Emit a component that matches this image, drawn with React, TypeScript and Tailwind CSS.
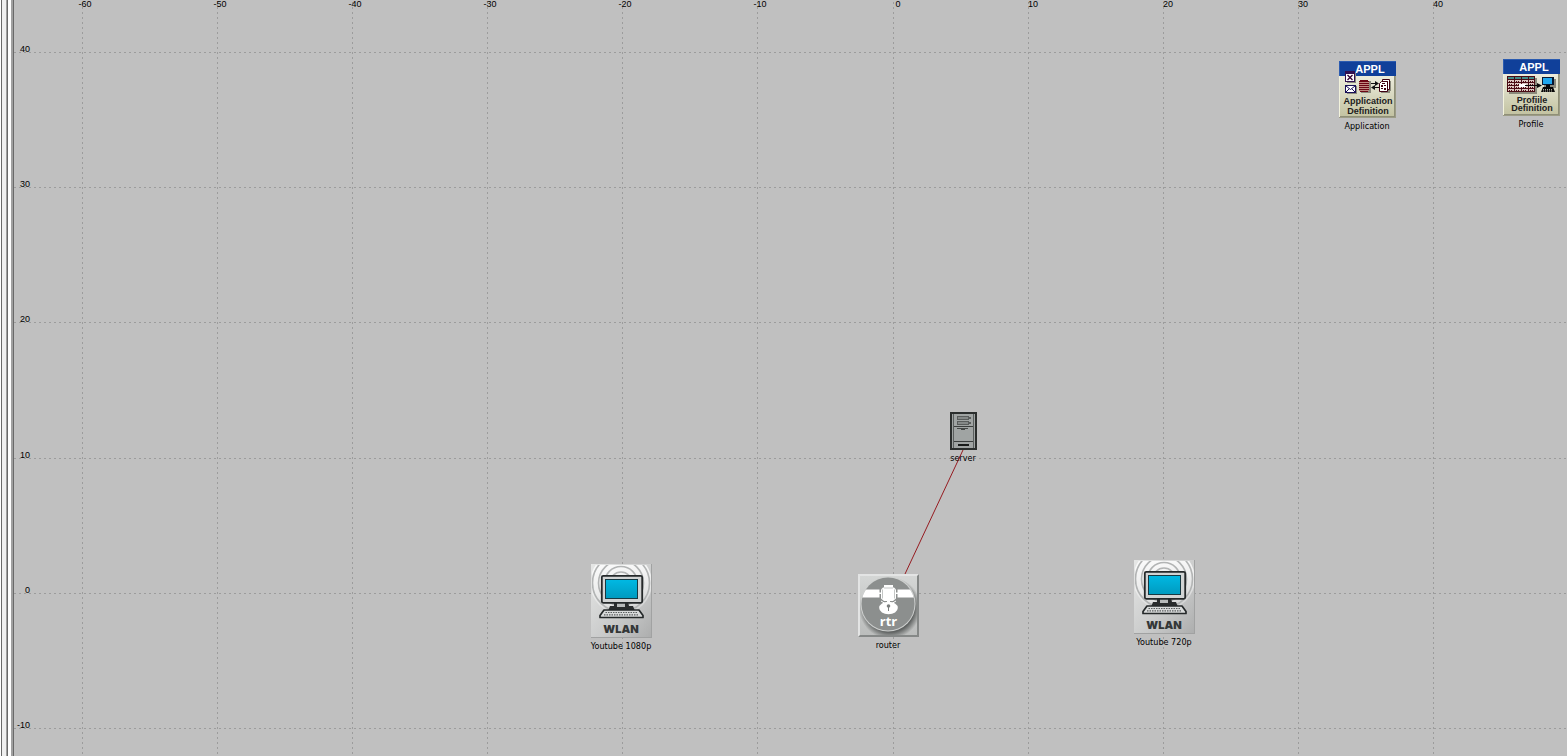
import type { ReactNode } from "react";

const columns = [
  { x: 82, label: "-60" },
  { x: 217, label: "-50" },
  { x: 352, label: "-40" },
  { x: 487, label: "-30" },
  { x: 622, label: "-20" },
  { x: 757, label: "-10" },
  { x: 893, label: "0" },
  { x: 1028, label: "10" },
  { x: 1163, label: "20" },
  { x: 1298, label: "30" },
  { x: 1433, label: "40" },
];

const rows = [
  { y: 52, label: "40" },
  { y: 187, label: "30" },
  { y: 322, label: "20" },
  { y: 458, label: "10" },
  { y: 593, label: "0" },
  { y: 728, label: "-10" },
];

function Grid() {
  return (
    <svg className="absolute inset-0 h-full w-full" aria-hidden="true" shapeRendering="crispEdges">
      <g stroke="#9c9c9c" strokeWidth="1" strokeDasharray="2 3">
        {columns.map((c) => (
          <line key={c.x} x1={c.x + 0.5} x2={c.x + 0.5} y1="2" y2="100%" />
        ))}
        {rows.map((r) => (
          <line key={r.y} x1="14" x2="100%" y1={r.y + 0.5} y2={r.y + 0.5} />
        ))}
      </g>
    </svg>
  );
}

function AxisLabels() {
  return (
    <div className="font-['Liberation_Sans',sans-serif] text-[9px] leading-[10px] text-black">
      {columns.map((c) => (
        <span
          key={c.x}
          className="absolute -top-px w-10 -translate-x-1/2 text-center"
          style={{ left: c.x + (c.label.startsWith("-") ? 3 : 5) }}
        >
          {c.label}
        </span>
      ))}
      {rows.map((r) => (
        <span key={r.y} className="absolute left-0 w-[30px] text-right" style={{ top: r.y - 8 }}>
          {r.label}
        </span>
      ))}
    </div>
  );
}

function WindowEdge() {
  return (
    <div className="absolute inset-y-0 left-0 flex" aria-hidden="true">
      <div className="w-px bg-white" />
      <div className="w-px bg-[#696969]" />
      <div className="w-1 bg-[#f0f0f0]" />
      <div className="w-px bg-[#a0a0a0]" />
      <div className="w-px bg-[#696969]" />
      <div className="w-[3px] bg-white" />
      <div className="w-0.5 bg-[#a0a0a0]" />
      <div className="w-px bg-[#696969]" />
    </div>
  );
}

function ApplIcon({ children, lines, baselines }: { children: ReactNode; lines: [string, string]; baselines: [number, number] }) {
  return (
    <svg width="57" height="57" viewBox="0 0 57 57" aria-hidden="true">
      <defs>
        <linearGradient id="beige" x1="0" y1="0" x2="0" y2="1">
          <stop offset="0" stopColor="#ececdc" />
          <stop offset="1" stopColor="#c3c3a2" />
        </linearGradient>
      </defs>
      <rect width="57" height="57" fill="#9c9c86" />
      <rect width="56" height="56" fill="#f2f2dc" />
      <rect x="1" y="15" width="54" height="40" fill="url(#beige)" />
      <path d="M55 15h1v41H1v-1h54z" fill="#8f8f78" />
      <rect width="57" height="15" fill="#10409a" />
      <path d="M0 .5h57M.5 0v15" stroke="#2b5bb0" />
      <g fontFamily="'Liberation Sans', sans-serif" fontWeight="bold" textAnchor="middle">
        <text x="31" y="12" fontSize="11" fill="#fff" fontFamily="'Liberation Sans Narrow', 'Liberation Sans', sans-serif">
          APPL
        </text>
        <text x="29" y={baselines[0]} fontSize="9" fill="#202020">
          {lines[0]}
        </text>
        <text x="29" y={baselines[1]} fontSize="9" fill="#202020">
          {lines[1]}
        </text>
      </g>
      {children}
    </svg>
  );
}

function ApplicationArt() {
  return (
    <g>
      <path d="M8 21h9v1H8zM16 12h1v10h-1zM8 32h10v1H8zM17 25h1v8h-1z" fill="#8a8a7c" />
      <path d="M6 10h10v11H6z" fill="#301050" />
      <path d="M7 13h8v7H7z" fill="#fff" />
      <path d="M8.500 14l5 5m0-5l-5 5" stroke="#300030" strokeWidth="1.300" />
      <path d="M6 24h11v8H6z" fill="#181058" />
      <path d="M7 25h9v6H7z" fill="#fff" />
      <path d="M7 25l4.500 3.500L16 25M7 31l3-3m6 3l-3-3" fill="none" stroke="#181058" />
      <path d="M22 20h10v12H22z" fill="#8a8a7c" />
      <path d="M20 20h10v10H20z" fill="#c08a80" />
      <path d="M21 19h8v1h-8zM20 20h10v1H20zM20 22h10v1H20zM20 24h10v1H20zM20 26h10v1H20zM20 28h10v1H20zM21 30h8v1h-8z" fill="#6c0814" />
      <path d="M32 22h4v-2l4 2.500-4 2.500v-2h-4zM40 26h-4v-2l-4 2.500 4 2.500v-2h4z" fill="#101010" />
      <path d="M43 20h9v10h-1v2h-9z" fill="#8a8a7c" />
      <path d="M43.500 18.500h7v10h-2v-8h-5z" fill="#fff" stroke="#400012" />
      <path d="M40.500 22.500l2-2h6v10h-8z" fill="#fff" stroke="#400012" />
      <path d="M43 22h3v1h-3zM42 24h2v2h-2zM45 24h2v1h-2zM42 27h2v1h-2zM45 27h2v2h-2z" fill="#400012" />
    </g>
  );
}

function ProfileArt() {
  return (
    <g>
      <path d="M6 19h28v16H6z" fill="#8a8a7c" />
      <path d="M4 17h28v16H4z" fill="#4a0c14" />
      <path d="M5 18h6v2H5zM12 18h6v2h-6zM19 18h6v2h-6zM26 18h5v2h-5z" fill="#438c88" />
      {[21, 24, 27, 30].map((y) => (
        <g key={y}>
          <path d={`M5 ${y}h6v2H5zM12 ${y}h6v2h-6zM19 ${y}h6v2h-6zM26 ${y}h5v2h-5z`} fill="#dcc8c2" />
          <path d={`M6 ${y + 1}.5h4M13 ${y + 1}.5h4M20 ${y + 1}.5h4M27 ${y + 1}.5h3`} stroke="#4a0c14" strokeDasharray="1 1" />
        </g>
      ))}
      <path d="M16 25h7v3h-7z" fill="#fff" />
      <path d="M22 26h12v-2l5 2.500-5 2.500v-2H22z" fill="#0a0a0a" />
      <path d="M41 20h12v9H41z" fill="#8a8a7c" />
      <path d="M39 18h12v8H39z" fill="#081830" />
      <path d="M40 19h9v6h-9z" fill="#20a8ef" />
      <path d="M43 26h4v2h3l2 5H38l2-5h3z" fill="#080808" />
      <path d="M40 30.500h10M40 32h10" stroke="#d8d8c8" strokeWidth=".8" strokeDasharray="1 1" />
    </g>
  );
}

function WlanIcon() {
  return (
    <svg width="61" height="74" viewBox="0 0 61 74" aria-hidden="true">
      <defs>
        <linearGradient id="wlan-bg" x1="0" y1="0" x2="1" y2="1">
          <stop offset="0" stopColor="#e6e7e6" />
          <stop offset=".6" stopColor="#c9caca" />
          <stop offset="1" stopColor="#adaeae" />
        </linearGradient>
        <linearGradient id="wlan-screen" x1="0" y1="0" x2="0" y2="1">
          <stop offset="0" stopColor="#00b8e2" />
          <stop offset="1" stopColor="#009bc0" />
        </linearGradient>
        <linearGradient id="wlan-glow" x1="0" y1="0" x2="0" y2="1">
          <stop offset="0" stopColor="#fff" />
          <stop offset="1" stopColor="#fff" stopOpacity=".2" />
        </linearGradient>
        <clipPath id="wlan-clip">
          <path d="M1 1h59v49H1z" />
        </clipPath>
      </defs>
      <rect width="61" height="74" fill="#a1a2a2" />
      <rect width="60" height="73" fill="url(#wlan-bg)" />
      <g clipPath="url(#wlan-clip)">
        <circle cx="30" cy="19" r="31" fill="url(#wlan-glow)" />
        <g fill="none" stroke="#b2b4b4" strokeWidth="1.600">
          <circle cx="30" cy="19" r="11" />
          <circle cx="30" cy="19" r="16.500" />
          <circle cx="30" cy="19" r="22.500" />
          <circle cx="30" cy="19" r="28.500" />
        </g>
      </g>
      <path d="M23 38h14l1 4h4l2 5H17l2-5h4z" fill="#292c2d" />
      <path d="M26 39h8v4h-8z" fill="#b7baba" />
      <rect x="10.800" y="11.800" width="40.400" height="27" rx="1.500" fill="#d2d4d4" stroke="#25292a" strokeWidth="1.800" />
      <rect x="14" y="15" width="33" height="20" fill="#173942" />
      <rect x="15" y="16" width="31" height="18" fill="url(#wlan-screen)" />
      <path d="M13 46h35l4 5.500v2H9v-2z" fill="#d8dada" stroke="#25292a" strokeWidth="1.700" strokeLinejoin="round" />
      <path d="M14.500 48.500h32M13 50.800h35" stroke="#5a5e5f" strokeWidth="1.200" strokeDasharray="1.500 1" />
      <text x="30" y="69" textAnchor="middle" fontSize="11" fontWeight="900" fontFamily="Inter, 'Liberation Sans', sans-serif" fill="#343738">
        WLAN
      </text>
    </svg>
  );
}

function RouterIcon() {
  return (
    <svg width="61" height="63" viewBox="0 0 61 63" aria-hidden="true">
      <defs>
        <linearGradient id="router-bg" x1="0" y1="0" x2="0" y2="1">
          <stop offset="0" stopColor="#d4d6d5" />
          <stop offset="1" stopColor="#bbbdbc" />
        </linearGradient>
        <radialGradient id="router-shadow">
          <stop offset=".78" stopColor="#606362" />
          <stop offset="1" stopColor="#606362" stopOpacity="0" />
        </radialGradient>
        <clipPath id="router-disc">
          <circle cx="30" cy="30" r="26.500" />
        </clipPath>
        <clipPath id="router-tile">
          <path d="M2 2h57v59H2z" />
        </clipPath>
      </defs>
      <rect width="61" height="63" fill="#858887" />
      <path d="M0 0h61l-2 2H2v59l-2 2z" fill="#e3e4e4" />
      <rect x="2" y="2" width="57" height="59" fill="url(#router-bg)" />
      <circle cx="32" cy="34" r="31" fill="url(#router-shadow)" clipPath="url(#router-tile)" />
      <circle cx="30" cy="30" r="27.500" fill="#d0d2d1" />
      <circle cx="30" cy="30" r="26.500" fill="#8c8f8e" />
      <path d="M6 15.500h15.500v8H2zM39.500 15.500H54l4 8H39.500z" fill="#fff" clipPath="url(#router-disc)" />
      <g fill="#fff">
        <path d="M21 18.500h19v1.500H21z" />
        <path d="M26 11h9v3h-9z" />
        <path d="M25 13.500h11l2 2v9l-3 2.500h-9l-3-2.500v-9z" />
        <path d="M29 26h3v3h-3z" />
        <ellipse cx="30.500" cy="34" rx="9.300" ry="6.200" />
      </g>
      <path d="M26 14h9M24.500 15.500v9M36.500 15.500v9" stroke="#b4b7b6" strokeWidth=".8" fill="none" />
      <path d="M23 27l7.500 4.500L38 27" stroke="#fff" fill="none" />
      <circle cx="30.500" cy="32" r="1.800" fill="#7c7f7e" />
      <path d="M30.500 32v5" stroke="#7c7f7e" />
      <text x="30.500" y="52" textAnchor="middle" fontSize="13" fontWeight="bold" fontFamily="'Open Sans', sans-serif" fill="#fff">
        rtr
      </text>
    </svg>
  );
}

function ServerIcon() {
  return (
    <svg width="27" height="38" viewBox="0 0 27 38" aria-hidden="true">
      <rect x="1" y="1" width="25" height="36" fill="#a0a4a3" stroke="#2b2e2d" strokeWidth="2" />
      <path d="M3.500 2v34M23.500 2v34" stroke="#5a5e5d" />
      <path d="M4 14.500h19M4 29.500h19" stroke="#3b3e3d" />
      <rect x="7.500" y="4.500" width="11" height="3" fill="#858988" stroke="#5a5d5c" />
      <rect x="7.500" y="9.500" width="11" height="3" fill="#858988" stroke="#5a5d5c" />
      <path d="M19 6h2M19 11h2" stroke="#5a5d5c" strokeWidth="2" />
      <path d="M7 16.500h11M11 17.500h4" stroke="#454847" />
      <rect x="8" y="32" width="11" height="2" fill="#191b1a" />
    </svg>
  );
}

function Node({ x, y, label, children }: { x: number; y: number; label: string; children: ReactNode }) {
  return (
    <figure className="absolute flex w-24 flex-col items-center gap-0.5" style={{ left: x - 48, top: y }}>
      {children}
      <figcaption className="whitespace-nowrap font-['DejaVu_Sans_Condensed','DejaVu_Sans',sans-serif] text-[9px] leading-3 text-black">
        {label}
      </figcaption>
    </figure>
  );
}

export default function App() {
  return (
    <main className="relative h-screen overflow-hidden bg-[#c0c0c0]">
      <Grid />
      <WindowEdge />
      <AxisLabels />
      <Node x={1367} y={61} label="Application">
        <ApplIcon lines={["Application", "Definition"]} baselines={[43, 53]}>
          <ApplicationArt />
        </ApplIcon>
      </Node>
      <Node x={1531} y={59} label="Profile">
        <ApplIcon lines={["Profiile", "Definition"]} baselines={[44, 52]}>
          <ProfileArt />
        </ApplIcon>
      </Node>
      <Node x={963} y={412} label="server">
        <ServerIcon />
      </Node>
      <svg className="absolute inset-0 h-full w-full" aria-hidden="true">
        <line x1="963" y1="450" x2="905" y2="574" stroke="#951b20" />
      </svg>
      <Node x={621} y={564} label="Youtube 1080p">
        <WlanIcon />
      </Node>
      <Node x={888} y={574} label="router">
        <RouterIcon />
      </Node>
      <Node x={1164} y={560} label="Youtube 720p">
        <WlanIcon />
      </Node>
    </main>
  );
}
